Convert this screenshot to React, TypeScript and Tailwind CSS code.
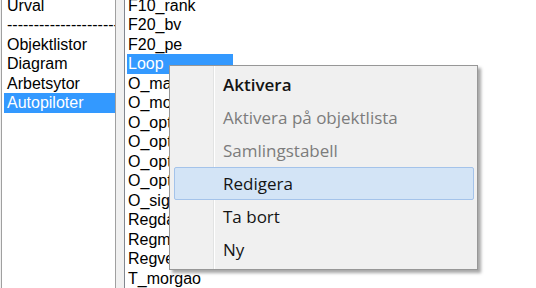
const leftItems = ["Urval", "---", "Objektlistor", "Diagram", "Arbetsytor", "Autopiloter"];

const rightItems = [
  "F10_rank",
  "F20_bv",
  "F20_pe",
  "Loop",
  "O_manuell",
  "O_morgon",
  "O_optimering1",
  "O_optimering2",
  "O_optimering3",
  "O_optimering4",
  "O_signal",
  "Regdag",
  "Regmorgon",
  "Regvecka",
  "T_morgao",
];

const menuItems: { label: string; bold?: boolean; disabled?: boolean; hover?: boolean }[] = [
  { label: "Aktivera", bold: true },
  { label: "Aktivera på objektlista", disabled: true },
  { label: "Samlingstabell", disabled: true },
  { label: "Redigera", hover: true },
  { label: "Ta bort" },
  { label: "Ny" },
];

function ListRow({ text, selected, width }: { text: string; selected?: boolean; width: string }) {
  return (
    <div
      className={`h-[19.5px] overflow-hidden whitespace-nowrap leading-[19.5px] ${width} ${
        selected ? "bg-[#3399ff] text-white" : "text-black"
      }`}
    >
      {text}
    </div>
  );
}

function ContextMenu() {
  return (
    <div className="absolute left-[169px] top-[65px] w-[309px] border border-[#979797] bg-[#f0f0f0] pb-[3px] pt-[2px] shadow-[3px_3px_3px_rgba(0,0,0,0.35)] font-['Open_Sans','Segoe_UI',sans-serif] text-[17px]">
      {/* gutter separator */}
      <div className="absolute bottom-0 left-[43px] top-0 w-px bg-[#e2e3e3]" />
      <div className="absolute bottom-0 left-[44px] top-0 w-px bg-white" />
      {menuItems.map((m) => (
        <div key={m.label} className="relative h-[33px] px-[4px] pr-[3px]">
          <div
            className={`flex h-full items-center rounded-[2px] border pl-[48px] ${
              m.hover ? "border-[#a4c3ea] bg-[#d3e4f6]" : "border-transparent"
            } ${m.disabled ? "text-[#7c7c7c]" : "text-[#141414]"} ${m.bold ? "font-semibold" : ""}`}
          >
            {m.label}
          </div>
        </div>
      ))}
    </div>
  );
}

export default function App() {
  return (
    <div className="relative h-[288px] w-[536px] overflow-hidden bg-[#f0f0f0] font-['Liberation_Sans',Arial,sans-serif] text-[16px]">
      <div className="flex h-full">
        <div className="ml-px h-full w-[115px] overflow-hidden border-l border-r border-[#a0a0a0] bg-white">
          <div className="-mt-[4.5px] pl-[2px]">
            {leftItems.map((t) =>
              t === "---" ? (
                <div key={t} className="h-[19.5px] overflow-hidden whitespace-nowrap pl-[3px] leading-[19.5px] text-black">
                  {"-".repeat(40)}
                </div>
              ) : (
                <ListRow key={t} width="w-full pl-[3px]" text={t} selected={t === "Autopiloter"} />
              ),
            )}
          </div>
        </div>
        <div className="ml-[8px] h-full flex-1 overflow-hidden border-l border-[#828790] bg-white">
          <div className="-mt-[4.5px] pl-[2px]">
            {rightItems.map((t) => (
              <ListRow key={t} width="w-[106px] pl-[1px]" text={t} selected={t === "Loop"} />
            ))}
          </div>
        </div>
      </div>
      <ContextMenu />
    </div>
  );
}
